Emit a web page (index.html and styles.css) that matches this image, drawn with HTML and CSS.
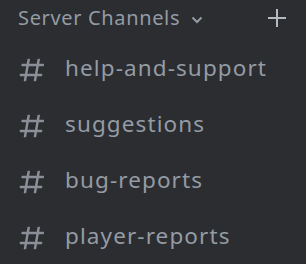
FILE: index.html
```html
<!DOCTYPE html>
<html>
<head>
  <meta charset="UTF-8">
  <title>Server Channels</title>
  <link rel="stylesheet" href="styles.css">
</head>
<body>

<div class="sidebar">
  <div class="category">
    <span class="categoryName">Server Channels</span>
    <svg class="chevron" width="12" height="8" viewBox="0 0 12 8"><path d="M1.5 1.5 L6 6 L10.5 1.5" fill="none" stroke="currentColor" stroke-width="2"/></svg>
    <svg class="plus" width="18" height="18" viewBox="0 0 18 18"><path d="M9 0 V18 M0 9 H18" stroke="currentColor" stroke-width="2"/></svg>
  </div>

  <div class="channelList">
    <div class="channel">
      <svg class="hash" width="30" height="30" viewBox="0 0 24 24"><path fill="currentColor" fill-rule="evenodd" d="M5.89 21C5.58 21 5.34 20.72 5.39 20.41L6 17H2.6C2.28 17 2.05 16.72 2.1 16.41L2.28 15.41C2.32 15.17 2.53 15 2.77 15H6.35L7.41 9H4.01C3.69 9 3.46 8.72 3.51 8.41L3.69 7.41C3.73 7.17 3.94 7 4.18 7H7.76L8.4 3.41C8.44 3.17 8.65 3 8.89 3H9.87C10.18 3 10.42 3.28 10.37 3.59L9.76 7H15.76L16.4 3.41C16.44 3.17 16.65 3 16.89 3H17.87C18.18 3 18.42 3.28 18.37 3.59L17.76 7H21.16C21.48 7 21.71 7.28 21.66 7.59L21.48 8.59C21.44 8.83 21.23 9 20.99 9H17.41L16.35 15H19.75C20.07 15 20.3 15.28 20.25 15.59L20.07 16.59C20.03 16.83 19.82 17 19.58 17H16L15.36 20.59C15.32 20.83 15.11 21 14.87 21H13.89C13.58 21 13.34 20.72 13.39 20.41L14 17H8L7.36 20.59C7.32 20.83 7.11 21 6.87 21H5.89ZM9.41 9L8.35 15H14.35L15.41 9H9.41Z"/></svg>
      <span class="channelName">help-and-support</span>
    </div>
    <div class="channel">
      <svg class="hash" width="30" height="30" viewBox="0 0 24 24"><path fill="currentColor" fill-rule="evenodd" d="M5.89 21C5.58 21 5.34 20.72 5.39 20.41L6 17H2.6C2.28 17 2.05 16.72 2.1 16.41L2.28 15.41C2.32 15.17 2.53 15 2.770 15H6.35L7.41 9H4.01C3.69 9 3.46 8.72 3.51 8.41L3.69 7.41C3.73 7.17 3.94 7 4.18 7H7.76L8.4 3.41C8.44 3.17 8.65 3 8.89 3H9.87C10.18 3 10.42 3.28 10.37 3.59L9.76 7H15.76L16.4 3.41C16.44 3.17 16.65 3 16.89 3H17.87C18.18 3 18.42 3.28 18.37 3.59L17.76 7H21.16C21.48 7 21.71 7.28 21.66 7.59L21.48 8.59C21.44 8.83 21.23 9 20.99 9H17.41L16.35 15H19.75C20.07 15 20.3 15.28 20.25 15.59L20.07 16.59C20.03 16.83 19.82 17 19.58 17H16L15.36 20.59C15.32 20.83 15.11 21 14.87 21H13.89C13.58 21 13.34 20.72 13.39 20.41L14 17H8L7.36 20.59C7.32 20.83 7.11 21 6.87 21H5.89ZM9.41 9L8.35 15H14.35L15.41 9H9.41Z"/></svg>
      <span class="channelName">suggestions</span>
    </div>
    <div class="channel">
      <svg class="hash" width="30" height="30" viewBox="0 0 24 24"><path fill="currentColor" fill-rule="evenodd" d="M5.89 21C5.58 21 5.34 20.72 5.39 20.41L6 17H2.6C2.28 17 2.05 16.72 2.1 16.41L2.28 15.41C2.32 15.17 2.53 15 2.77 15H6.35L7.41 9H4.01C3.69 9 3.46 8.72 3.51 8.41L3.69 7.41C3.73 7.17 3.94 7 4.18 7H7.76L8.4 3.41C8.44 3.17 8.65 3 8.89 3H9.87C10.18 3 10.42 3.28 10.37 3.59L9.76 7H15.76L16.4 3.41C16.44 3.17 16.65 3 16.89 3H17.87C18.18 3 18.42 3.28 18.37 3.59L17.76 7H21.16C21.48 7 21.71 7.28 21.66 7.59L21.48 8.59C21.44 8.83 21.23 9 20.99 9H17.41L16.35 15H19.75C20.07 15 20.3 15.28 20.25 15.59L20.07 16.59C20.03 16.83 19.82 17 19.58 17H16L15.36 20.59C15.32 20.83 15.11 21 14.87 21H13.89C13.58 21 13.34 20.72 13.39 20.41L14 17H8L7.36 20.59C7.32 20.83 7.11 21 6.87 21H5.89ZM9.41 9L8.35 15H14.35L15.41 9H9.41Z"/></svg>
      <span class="channelName">bug-reports</span>
    </div>
    <div class="channel">
      <svg class="hash" width="30" height="30" viewBox="0 0 24 24"><path fill="currentColor" fill-rule="evenodd" d="M5.89 21C5.58 21 5.34 20.72 5.39 20.41L6 17H2.6C2.28 17 2.05 16.72 2.1 16.41L2.28 15.41C2.32 15.17 2.53 15 2.77 15H6.35L7.41 9H4.01C3.69 9 3.46 8.72 3.51 8.41L3.69 7.41C3.73 7.17 3.94 7 4.18 7H7.76L8.4 3.41C8.44 3.17 8.65 3 8.89 3H9.87C10.18 3 10.42 3.28 10.37 3.59L9.76 7H15.76L16.4 3.41C16.44 3.17 16.65 3 16.89 3H17.87C18.18 3 18.42 3.28 18.37 3.59L17.76 7H21.16C21.48 7 21.71 7.28 21.66 7.59L21.48 8.59C21.44 8.83 21.23 9 20.99 9H17.41L16.35 15H19.75C20.07 15 20.3 15.28 20.25 15.59L20.07 16.59C20.03 16.83 19.82 17 19.58 17H16L15.36 20.59C15.32 20.83 15.11 21 14.87 21H13.89C13.58 21 13.34 20.72 13.39 20.41L14 17H8L7.36 20.59C7.32 20.83 7.11 21 6.87 21H5.89ZM9.41 9L8.35 15H14.35L15.41 9H9.41Z"/></svg>
      <span class="channelName">player-reports</span>
    </div>
  </div>
</div>

</body>
</html>
```

FILE: styles.css
```css
body {
  margin: 0;
  background: #2b2d31;
  color: #949ba4;
  font-family: "Noto Sans", sans-serif;
  overflow: hidden;
}

.sidebar {
  width: 306px;
  height: 264px;
}

.category {
  height: 36px;
  display: flex;
  align-items: center;
  padding: 0 20px 0 18px;
  margin-bottom: 4px;
}

.categoryName {
  font-size: 20px;
  line-height: 36px;
  letter-spacing: 0.65px;
}

.chevron {
  margin-left: 11px;
  margin-top: 3px;
}

.plus {
  margin-left: auto;
  color: #b5bac1;
}

.channel {
  height: 56px;
  display: flex;
  align-items: flex-start;
  padding-left: 17px;
  gap: 18px;
}

.channelName {
  font-size: 22.5px;
  line-height: 56px;
  letter-spacing: 1.1px;
}

.hash {
  color: #8a8f98;
  margin-top: 15px;
  flex-shrink: 0;
}
```
